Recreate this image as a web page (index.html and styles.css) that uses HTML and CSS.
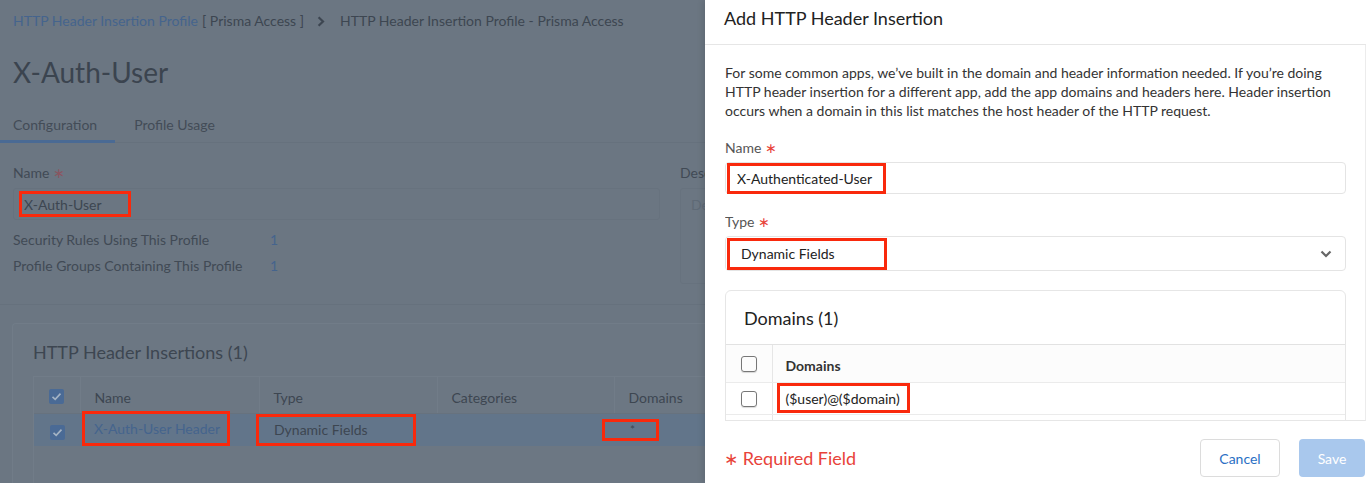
FILE: index.html
```html
<!DOCTYPE html>
<html lang="en">
<head>
<meta charset="utf-8">
<title>HTTP Header Insertion Profile</title>
<link rel="stylesheet" href="styles.css">
</head>
<body>
<div class="screen">
  <main class="page">
    <nav class="crumbs">
      <span class="crumb-link">HTTP Header Insertion Profile</span>
      <span class="crumb-scope">[ Prisma Access ]</span>
      <svg class="crumb-sep" viewBox="0 0 8 11" width="8" height="11"><path d="M1.6 1.2 L6 5.5 L1.6 9.8" fill="none" stroke="currentColor" stroke-width="2.2"/></svg>
      <span class="crumb-current">HTTP Header Insertion Profile - Prisma Access</span>
    </nav>
    <h1 class="page-title">X-Auth-User</h1>
    <div class="tabs">
      <div class="tab tab-active">Configuration</div>
      <div class="tab">Profile Usage</div>
    </div>
    <section class="config">
      <div class="config-main">
        <div class="field-label">Name <span class="req">∗</span></div>
        <div class="text-box"><span class="mark mark-name">X-Auth-User</span></div>
        <div class="stats">
          <span>Security Rules Using This Profile</span><span class="stat-val">1</span>
          <span>Profile Groups Containing This Profile</span><span class="stat-val">1</span>
        </div>
      </div>
      <div class="config-desc">
        <div class="field-label">Description</div>
        <div class="text-area">Description</div>
      </div>
    </section>
    <section class="card">
      <h2 class="card-title">HTTP Header Insertions (1)</h2>
      <div class="table-wrap">
        <table class="grid">
          <thead>
            <tr>
              <th class="col-check"><span class="cb cb-on"><svg viewBox="0 0 15 15" width="15" height="15"><path d="M3.5 7.8 L6.2 10.4 L11.5 4.6" fill="none" stroke="currentColor" stroke-width="1.6"/></svg></span></th>
              <th class="col-name">Name</th>
              <th class="col-type">Type</th>
              <th class="col-cat">Categories</th>
              <th class="col-dom">Domains</th>
            </tr>
          </thead>
          <tbody>
            <tr class="row-selected">
              <td class="col-check"><span class="cb cb-on"><svg viewBox="0 0 15 15" width="15" height="15"><path d="M3.5 7.8 L6.2 10.4 L11.5 4.6" fill="none" stroke="currentColor" stroke-width="1.6"/></svg></span></td>
              <td><span class="mark mark-rowname">X-Auth-User Header</span></td>
              <td><span class="mark mark-rowtype">Dynamic Fields</span></td>
              <td></td>
              <td><span class="mark mark-rowdom">*</span></td>
            </tr>
          </tbody>
        </table>
      </div>
    </section>
  </main>

  <aside class="drawer">
    <header class="drawer-head">Add HTTP Header Insertion</header>
    <div class="drawer-body">
      <p class="intro">For some common apps, we’ve built in the domain and header information needed. If you’re doing HTTP header insertion for a different app, add the app domains and headers here. Header insertion occurs when a domain in this list matches the host header of the HTTP request.</p>
      <div class="d-label">Name <span class="d-req">∗</span></div>
      <div class="d-input"><span class="mark mark-dname">X-Authenticated-User</span></div>
      <div class="d-label">Type <span class="d-req">∗</span></div>
      <div class="d-select">
        <span class="mark mark-dtype">Dynamic Fields</span>
        <svg class="chev" viewBox="0 0 12 8" width="12" height="8"><path d="M1.5 1.5 L6 6 L10.5 1.5" fill="none" stroke="currentColor" stroke-width="2.2"/></svg>
      </div>
      <div class="d-card">
        <div class="d-card-head">Domains (1)</div>
        <table class="d-grid">
          <thead>
            <tr><th class="d-col-check"><span class="d-cb"></span></th><th>Domains</th></tr>
          </thead>
          <tbody>
            <tr><td class="d-col-check"><span class="d-cb"></span></td><td><span class="mark mark-ddom">($user)@($domain)</span></td></tr>
            <tr><td class="d-col-check"></td><td></td></tr>
          </tbody>
        </table>
      </div>
    </div>
    <footer class="drawer-foot">
      <span class="required"><span class="required-star">∗</span> Required Field</span>
      <div class="actions">
        <button class="btn btn-cancel" type="button">Cancel</button>
        <button class="btn btn-save" type="button">Save</button>
      </div>
    </footer>
  </aside>
</div>
</body>
</html>
```

FILE: styles.css
```css
* { box-sizing: border-box; }
html, body { margin: 0; height: 100%; overflow: hidden; }
body {
  font-family: Lato, "Open Sans", "Liberation Sans", sans-serif;
  font-size: 14px;
  background: #6b7682;
  color: #3d4651;
}

.screen { position: relative; height: 483px; overflow: hidden; }
.page { width: 705px; height: 483px; overflow: hidden; }

/* breadcrumb */
.crumbs {
  display: flex;
  align-items: center;
  height: 31px;
  padding: 11px 13px 0;
  line-height: 20px;
  white-space: nowrap;
}
.crumb-link { color: #45648d; }
.crumb-scope { margin-left: 4px; }
.crumb-sep { margin: 0 15px 0 13px; color: #3d4651; }

.page-title {
  margin: 24px 0 0;
  padding-left: 13px;
  font-size: 28px;
  font-weight: 400;
  line-height: 34px;
  color: #3b444f;
}

/* tabs */
.tabs {
  display: flex;
  margin-top: 18px;
  border-bottom: 1px solid #66717d;
}
.tab {
  padding: 8px 18px 5px 19px;
  line-height: 20px;
  border-bottom: 3px solid transparent;
  margin-bottom: -1px;
  color: #434c57;
}
.tab:first-child { padding-left: 13px; }
.tab-active { border-bottom-color: #4a6a94; }

/* config section */
.config {
  display: flex;
  gap: 20px;
  padding: 20px 0 20px 13px;
  border-bottom: 1px solid #66717d;
}
.config-main { flex: none; width: 647px; }
.config-desc { flex: none; width: 647px; white-space: nowrap; }
.field-label { line-height: 20px; margin-bottom: 5px; color: #414a55; }
.req { color: #8a5560; }
.text-box {
  height: 32px;
  border: 1px solid #67727e;
  border-radius: 3px;
  display: flex;
  align-items: center;
  padding-left: 5px;
}
.text-area {
  height: 96px;
  border: 1px solid #67727e;
  border-radius: 3px;
  padding: 6px 10px;
  line-height: 20px;
  color: #5f6a76;
}
.stats {
  display: grid;
  grid-template-columns: 257px auto;
  row-gap: 6px;
  margin-top: 10px;
  line-height: 20px;
  color: #414a55;
}
.stat-val { color: #45648d; }

/* annotation marks */
.mark {
  display: inline-flex;
  align-items: center;
  border: 3px solid #f9290c;
  white-space: nowrap;
}
.mark-name { width: 112px; height: 26px; padding-left: 2px; }

/* card + table */
.card {
  margin: 18px 0 0 12px;
  border: 1px solid #717c88;
  border-right: 0;
  border-radius: 4px 0 0 4px;
  background: #6c7783;
  padding: 16px 0 0 20px;
  height: 220px;
}
.card-title {
  margin: 0;
  font-size: 18px;
  font-weight: 400;
  line-height: 24px;
  color: #3d4651;
}
.table-wrap {
  margin-top: 12px;
  border: 1px solid #717c88;
  border-right: 0;
  height: 180px;
  overflow: hidden;
}
.grid { border-collapse: collapse; width: 1310px; }
.grid th {
  height: 36px;
  text-align: left;
  font-weight: 400;
  padding: 6px 0 0 14px;
  color: #3d4651;
  border-right: 1px solid #717c88;
  border-bottom: 1px solid #67727e;
}
.grid th.col-check, .grid td.col-check { width: 46px; padding: 0; text-align: center; }
.grid .col-name { width: 179px; }
.grid .col-type { width: 178px; }
.grid .col-cat { width: 177px; }
.grid th:last-child { border-right: 0; }
.grid td { height: 33px; padding: 0 0 0 2px; vertical-align: middle; }
.row-selected td { background: #62758a; }
.grid td.col-check { padding-top: 2px; }
.cb {
  display: inline-flex;
  width: 15px;
  height: 15px;
  border-radius: 2px;
  vertical-align: middle;
}
.cb-on { background: #4a6a95; color: #a4b3c4; }
.mark-rowname { width: 148px; height: 35px; padding-left: 9px; color: #45648d; margin-top: -3px; }
.mark-rowtype { width: 160px; height: 32px; padding-left: 15px; margin-left: -5px; }
.mark-rowdom { width: 57px; height: 22px; padding-left: 25px; margin-left: -14px; font-size: 12px; }

/* drawer */
.drawer {
  position: absolute;
  top: 0;
  right: 0;
  width: 661px;
  height: 483px;
  background: #fff;
  display: flex;
  flex-direction: column;
  color: #333;
  box-shadow: -2px 0 6px rgba(0, 0, 0, 0.12);
}
.drawer-head {
  flex: none;
  height: 45px;
  padding: 6px 19px 0;
  border-bottom: 1px solid #e6e6e6;
  font-size: 18px;
  line-height: 24px;
  color: #222;
}
.drawer-body {
  flex: 1;
  overflow: hidden;
  margin-left: 20px;
  padding: 18px 19px 0 0;
  border-bottom: 1px solid #e6e6e6;
  border-right: 1px solid #ececec;
}
.intro { margin: 0; line-height: 19px; color: #333; }
.d-label { margin-top: 18px; margin-bottom: 4px; line-height: 20px; color: #555; }
.d-req { color: #e8433a; }
.d-input {
  height: 32px;
  border: 1px solid #e4e4e4;
  border-radius: 4px;
  display: flex;
  align-items: center;
  padding-left: 1px;
}
.mark-dname { width: 159px; height: 31px; padding-left: 7px; color: #222; }
.d-select {
  height: 35px;
  border: 1px solid #e4e4e4;
  border-radius: 4px;
  display: flex;
  align-items: center;
  justify-content: space-between;
  padding: 0 13px 0 1px;
}
.mark-dtype { width: 160px; height: 32px; padding-left: 11px; color: #222; }
.chev { color: #666; }

.d-card {
  margin-top: 19px;
  border: 1px solid #e6e6e6;
  border-radius: 6px;
}
.d-card-head {
  padding: 15px 18px 14px;
  border-bottom: 1px solid #e2e2e2;
  font-size: 18px;
  line-height: 24px;
  color: #222;
}
.d-grid { width: 100%; border-collapse: collapse; }
.d-grid th {
  height: 37px;
  text-align: left;
  padding: 4px 0 0 13px;
  font-weight: 700;
  font-size: 14px;
  color: #333;
  background: #fcfcfc;
  border-bottom: 1px solid #ebebeb;
}
.d-grid td { height: 32px; padding: 0 0 0 4px; border-bottom: 1px solid #ebebeb; }
.d-grid .d-col-check { width: 46px; padding: 0; text-align: center; border-right: 1px solid #e6e6e6; }
.d-cb {
  display: inline-block;
  width: 16px;
  height: 16px;
  border: 1.5px solid #777;
  border-radius: 3px;
  box-shadow: 0 1px 1px rgba(0, 0, 0, 0.15);
  vertical-align: middle;
}
.mark-ddom { width: 133px; height: 30px; padding-left: 6px; color: #222; }

.drawer-foot {
  flex: none;
  height: 62px;
  display: flex;
  align-items: flex-start;
  padding: 18px 1px 0 19px;
}
.required {
  font-size: 18px;
  line-height: 38px;
  color: #e8433a;
}
.required-star { font-family: "DejaVu Sans", sans-serif; font-size: 17px; }
.actions { margin-left: auto; display: flex; gap: 19px; }
.btn {
  height: 38px;
  border-radius: 4px;
  font-family: Lato, "Open Sans", sans-serif;
  font-size: 14px;
  cursor: pointer;
}
.btn-cancel { width: 80px; background: #fff; border: 1px solid #dcdcdc; color: #2a6fc4; }
.btn-save { width: 66px; background: #a9c8ed; border: 0; color: #fff; }
```
